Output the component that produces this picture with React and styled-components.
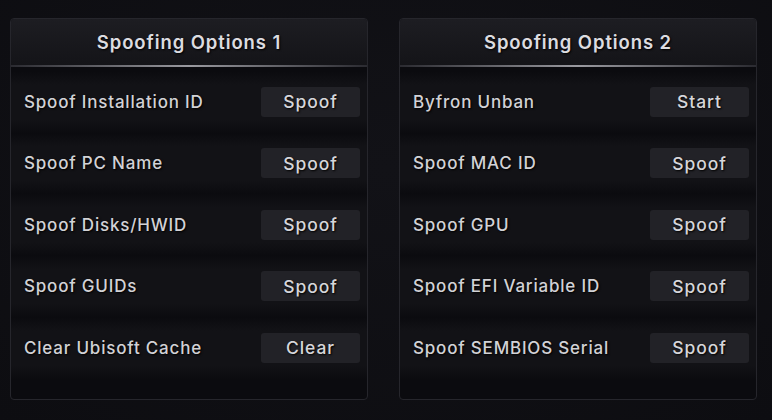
import React from "react";
import styled, { createGlobalStyle } from "styled-components";

const Global = createGlobalStyle`
  html, body { margin: 0; padding: 0; background: #0f0f13; }
  body { font-family: Inter, "Noto Sans", sans-serif; }
`;

const Page = styled.div`
  width: 772px;
  height: 420px;
  box-sizing: border-box;
  padding: 18px 14px 0 10px;
  display: flex;
  gap: 31px;
  background: radial-gradient(ellipse at 50% 40%, #121217 0%, #0d0d11 100%);
`;

const Panel = styled.section`
  width: 358px;
  height: 382px;
  box-sizing: border-box;
  border: 1px solid #26262c;
  border-radius: 4px;
  background: #0b0b0f;
  display: flex;
  flex-direction: column;
  overflow: hidden;
`;

const Header = styled.div`
  height: 46px;
  flex: none;
  display: flex;
  align-items: center;
  justify-content: center;
  background: linear-gradient(180deg, #1d1d22 0%, #141418 100%);
  color: #dcdce0;
  font-size: 18.5px;
  font-weight: 600;
  letter-spacing: 0.9px;
  text-shadow: 1px 1px 2px #000;
  border-bottom: 2px solid transparent;
  border-image: linear-gradient(90deg, #2a2a30 0%, #9a9aa0 50%, #2a2a30 100%) 1;
`;

const Body = styled.div`
  padding-top: 4px;
  display: flex;
  flex-direction: column;
`;

const Row = styled.div`
  height: 61.5px;
  box-sizing: border-box;
  padding: 0 7px 0 13px;
  display: flex;
  align-items: center;
  justify-content: space-between;
  background: linear-gradient(180deg, #0b0b0f 0%, #121216 22%, #121216 78%, #0b0b0f 100%);
`;

const Label = styled.span`
  color: #d2d2d6;
  font-size: 17px;
  font-weight: 500;
  letter-spacing: 0.8px;
  text-shadow: 1px 1px 2px #000;
`;

const Button = styled.button`
  width: 99px;
  height: 30px;
  padding: 0;
  border: none;
  border-radius: 3px;
  background: #222227;
  color: #d6d6da;
  font-family: inherit;
  font-size: 17.5px;
  font-weight: 500;
  letter-spacing: 0.9px;
  text-shadow: 1px 1px 2px #000;
  cursor: pointer;
`;

const panels = [
  {
    title: "Spoofing Options 1",
    rows: [
      ["Spoof Installation ID", "Spoof"],
      ["Spoof PC Name", "Spoof"],
      ["Spoof Disks/HWID", "Spoof"],
      ["Spoof GUIDs", "Spoof"],
      ["Clear Ubisoft Cache", "Clear"],
    ],
  },
  {
    title: "Spoofing Options 2",
    rows: [
      ["Byfron Unban", "Start"],
      ["Spoof MAC ID", "Spoof"],
      ["Spoof GPU", "Spoof"],
      ["Spoof EFI Variable ID", "Spoof"],
      ["Spoof SEMBIOS Serial", "Spoof"],
    ],
  },
];

export default function App() {
  return (
    <>
      <Global />
      <Page>
        {panels.map((p) => (
          <Panel key={p.title}>
            <Header>{p.title}</Header>
            <Body>
              {p.rows.map(([label, action]) => (
                <Row key={label}>
                  <Label>{label}</Label>
                  <Button>{action}</Button>
                </Row>
              ))}
            </Body>
          </Panel>
        ))}
      </Page>
    </>
  );
}
